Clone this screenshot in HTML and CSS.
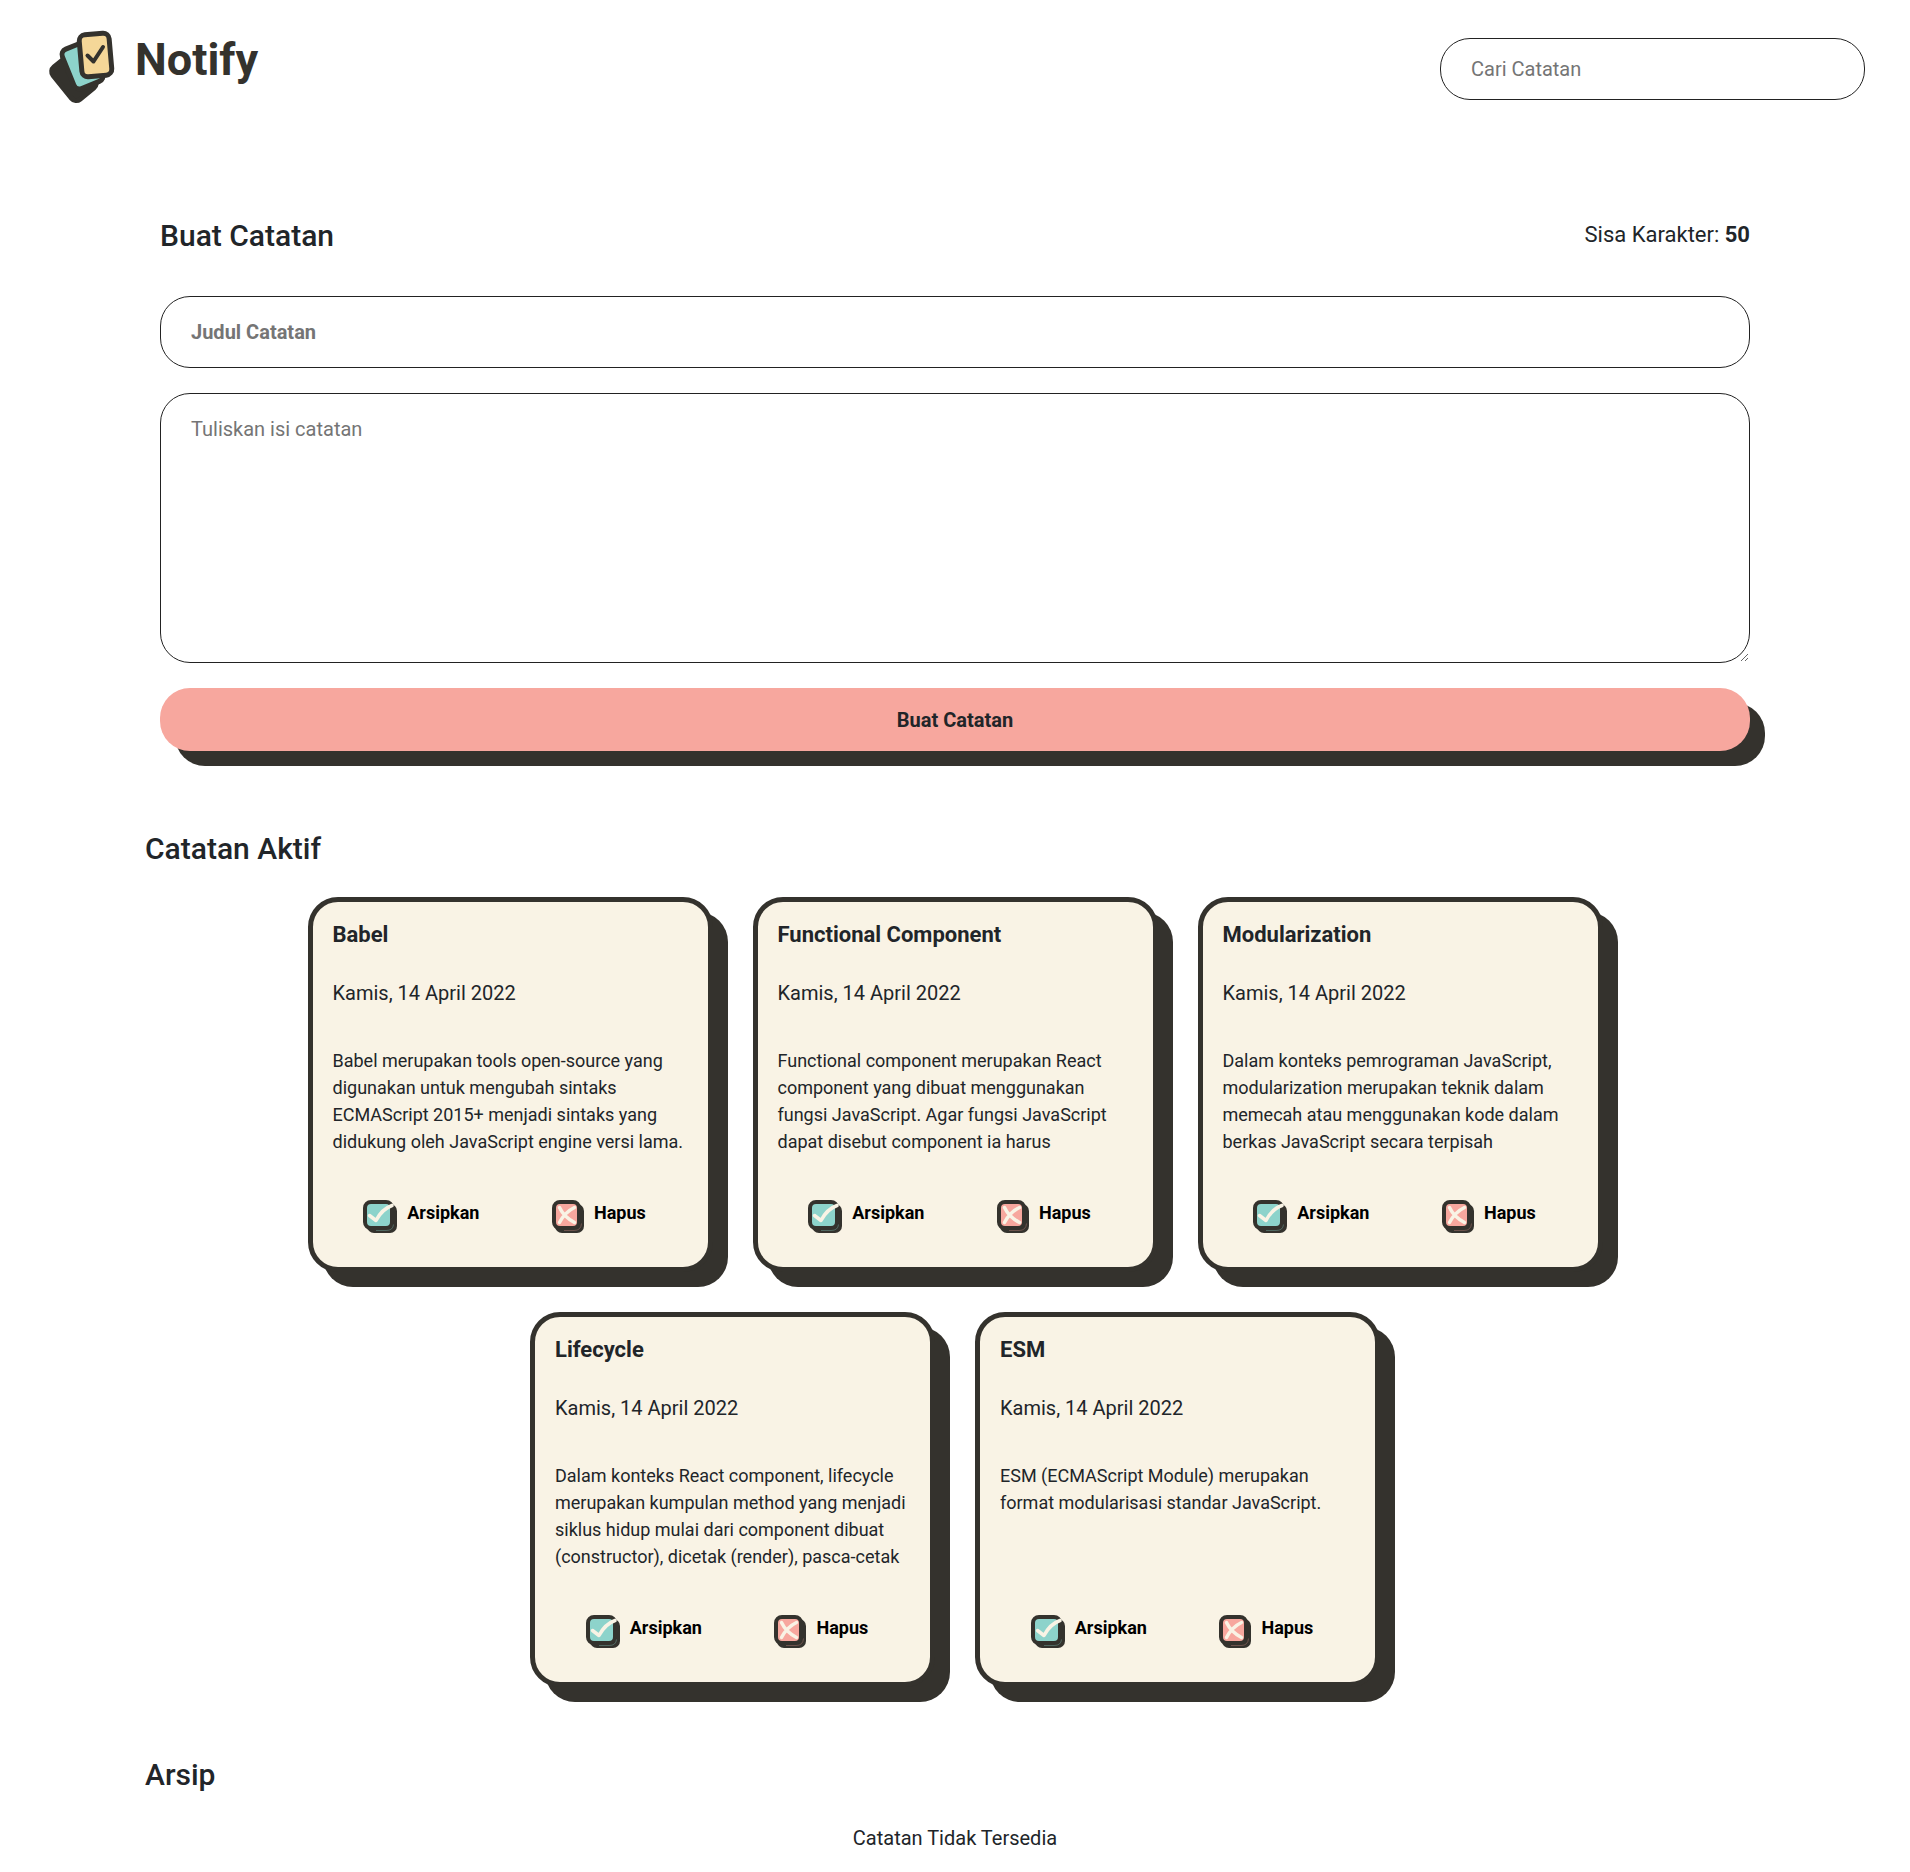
FILE: index.html
```html
<!DOCTYPE html>
<html lang="id">
<head>
<meta charset="utf-8">
<meta name="viewport" content="width=device-width, initial-scale=1">
<title>Notify</title>
<link rel="stylesheet" href="styles.css">
</head>
<body>
<svg class="sprite" aria-hidden="true">
  <symbol id="icon-archive" viewBox="0 0 34 34">
    <rect x="4" y="4" width="30" height="29" rx="7" fill="#34322d"/>
    <rect x="2" y="2" width="27" height="26" rx="6" fill="#8dd3cb" stroke="#34322d" stroke-width="4"/>
    <path d="M13 30.500h10q7 0 7.500-6" fill="none" stroke="#5f7f79" stroke-width=".7"/>
    <path d="M6.500 15.500L13 20.500Q19 9 29 5.500" fill="none" stroke="#f9f3e5" stroke-width="3.500" stroke-linecap="round" stroke-linejoin="round"/>
  </symbol>
  <symbol id="icon-delete" viewBox="0 0 32 34">
    <rect x="3" y="4" width="29" height="29" rx="7" fill="#34322d"/>
    <rect x="2" y="2" width="25" height="26" rx="6" fill="#f7a79e" stroke="#34322d" stroke-width="4"/>
    <path d="M12 30.500h10q7 0 7.500-7" fill="none" stroke="#86625c" stroke-width=".7"/>
    <path d="M7.500 7.500Q12 17 22.500 22.500M22.500 7.500Q13 12 7.500 22.500" fill="none" stroke="#f9f3e5" stroke-width="3.500" stroke-linecap="round"/>
  </symbol>
</svg>

<header class="header">
  <div class="brand">
    <svg class="brand-logo" viewBox="0 0 68 74" aria-hidden="true">
      <g stroke="#34322d" stroke-width="5">
        <rect transform="translate(27 76.500) rotate(-39)" x="2.500" y="-44" width="30" height="41.500" rx="6" fill="#34322d"/>
        <rect transform="translate(29.500 57.500) rotate(-22)" x="-2.500" y="-40" width="31" height="42.500" rx="6" fill="#8dd3cb"/>
        <rect transform="translate(47.500 25) rotate(-5)" x="-15" y="-21" width="30" height="42" rx="6" fill="#f5d798"/>
        <path d="M39.500 25.500L45.500 31.500L55 17" fill="none" stroke-width="4" stroke-linecap="round" stroke-linejoin="round"/>
      </g>
    </svg>
    <h1 class="brand-name">Notify</h1>
  </div>
  <input class="field search" type="search" placeholder="Cari Catatan" aria-label="Cari Catatan">
</header>

<main class="main">
  <form class="note-form">
    <div class="form-head">
      <h2 class="heading">Buat Catatan</h2>
      <p class="counter">Sisa Karakter: <strong>50</strong></p>
    </div>
    <input class="field title-field" type="text" placeholder="Judul Catatan" aria-label="Judul Catatan">
    <textarea class="field body-field" placeholder="Tuliskan isi catatan" aria-label="Tuliskan isi catatan"></textarea>
    <button class="submit" type="submit">Buat Catatan</button>
  </form>

  <section class="section">
    <h2 class="heading">Catatan Aktif</h2>
    <div class="notes">
      <article class="note">
        <h3 class="note-title">Babel</h3>
        <p class="note-date">Kamis, 14 April 2022</p>
        <p class="note-body">Babel merupakan tools open-source yang digunakan untuk mengubah sintaks ECMAScript 2015+ menjadi sintaks yang didukung oleh JavaScript engine versi lama.</p>
        <div class="note-actions">
          <button class="action" type="button"><svg class="action-icon" aria-hidden="true"><use href="#icon-archive"/></svg>Arsipkan</button>
          <button class="action" type="button"><svg class="action-icon action-icon-delete" aria-hidden="true"><use href="#icon-delete"/></svg>Hapus</button>
        </div>
      </article>
      <article class="note">
        <h3 class="note-title">Functional Component</h3>
        <p class="note-date">Kamis, 14 April 2022</p>
        <p class="note-body">Functional component merupakan React component yang dibuat menggunakan fungsi JavaScript. Agar fungsi JavaScript dapat disebut component ia harus</p>
        <div class="note-actions">
          <button class="action" type="button"><svg class="action-icon" aria-hidden="true"><use href="#icon-archive"/></svg>Arsipkan</button>
          <button class="action" type="button"><svg class="action-icon action-icon-delete" aria-hidden="true"><use href="#icon-delete"/></svg>Hapus</button>
        </div>
      </article>
      <article class="note">
        <h3 class="note-title">Modularization</h3>
        <p class="note-date">Kamis, 14 April 2022</p>
        <p class="note-body">Dalam konteks pemrograman JavaScript, modularization merupakan teknik dalam memecah atau menggunakan kode dalam berkas JavaScript secara terpisah</p>
        <div class="note-actions">
          <button class="action" type="button"><svg class="action-icon" aria-hidden="true"><use href="#icon-archive"/></svg>Arsipkan</button>
          <button class="action" type="button"><svg class="action-icon action-icon-delete" aria-hidden="true"><use href="#icon-delete"/></svg>Hapus</button>
        </div>
      </article>
      <article class="note">
        <h3 class="note-title">Lifecycle</h3>
        <p class="note-date">Kamis, 14 April 2022</p>
        <p class="note-body">Dalam konteks React component, lifecycle merupakan kumpulan method yang menjadi siklus hidup mulai dari component dibuat (constructor), dicetak (render), pasca-cetak</p>
        <div class="note-actions">
          <button class="action" type="button"><svg class="action-icon" aria-hidden="true"><use href="#icon-archive"/></svg>Arsipkan</button>
          <button class="action" type="button"><svg class="action-icon action-icon-delete" aria-hidden="true"><use href="#icon-delete"/></svg>Hapus</button>
        </div>
      </article>
      <article class="note">
        <h3 class="note-title">ESM</h3>
        <p class="note-date">Kamis, 14 April 2022</p>
        <p class="note-body">ESM (ECMAScript Module) merupakan format modularisasi standar JavaScript.</p>
        <div class="note-actions">
          <button class="action" type="button"><svg class="action-icon" aria-hidden="true"><use href="#icon-archive"/></svg>Arsipkan</button>
          <button class="action" type="button"><svg class="action-icon action-icon-delete" aria-hidden="true"><use href="#icon-delete"/></svg>Hapus</button>
        </div>
      </article>
    </div>
  </section>

  <section class="section">
    <h2 class="heading">Arsip</h2>
    <p class="empty">Catatan Tidak Tersedia</p>
  </section>
</main>
</body>
</html>
```

FILE: styles.css
```css
:root {
  --dark: #34322d;
  --text: #212529;
  --pink: #f7a79e;
  --cream: #f9f3e5;
}

* {
  box-sizing: border-box;
}

body {
  margin: 0;
  background: #fff;
  color: var(--text);
  font-family: Roboto, "Liberation Sans", sans-serif;
  font-size: 20px;
  line-height: 30px;
}

h1, h2, h3, p {
  margin: 0;
}

.sprite {
  position: absolute;
  width: 0;
  height: 0;
}

/* Header */
.header {
  display: flex;
  justify-content: space-between;
  align-items: flex-start;
  padding: 30px 45px 0 48px;
}

.brand {
  display: flex;
  align-items: flex-start;
  gap: 19px;
}

.brand-logo {
  display: block;
  width: 68px;
  height: 74px;
}

.brand-name {
  color: var(--dark);
  font-size: 45px;
  font-weight: 700;
  line-height: 60px;
}

.field {
  display: block;
  width: 100%;
  margin: 0;
  padding: 20px 30px;
  border: 1px solid #222;
  border-radius: 30px;
  outline: 0;
  background: #fff;
  color: var(--text);
  font: inherit;
}

.field::placeholder {
  color: #757575;
  opacity: 1;
}

.search {
  width: 425px;
  margin-top: 8px;
  padding: 15px 30px;
  appearance: none;
}

/* Form */
.main {
  padding: 114px 145px 19px;
}

.note-form {
  display: flex;
  flex-direction: column;
  gap: 25px;
  padding: 0 15px;
}

.form-head {
  display: flex;
  justify-content: space-between;
  align-items: flex-start;
  padding-bottom: 17px;
}

.heading {
  font-size: 30px;
  font-weight: 500;
  line-height: 36px;
}

.counter {
  font-size: 22px;
  line-height: 33px;
}

.title-field {
  font-weight: 700;
}

.body-field {
  height: 270px;
  resize: both;
}

.submit {
  height: 63px;
  padding: 0 30px;
  border: 0;
  border-radius: 30px;
  background: var(--pink);
  box-shadow: 15px 15px 0 var(--dark);
  color: var(--text);
  font: inherit;
  font-weight: 700;
  cursor: pointer;
}

/* Notes */
.section {
  display: flex;
  flex-direction: column;
  gap: 30px;
  margin-top: 70px;
}

.note-form + .section {
  margin-top: 80px;
}

.notes {
  display: flex;
  flex-wrap: wrap;
  justify-content: center;
  gap: 40px;
}

.note {
  display: flex;
  flex-direction: column;
  width: 405px;
  min-height: 375px;
  padding: 20px 20px 33px;
  border: 5px solid var(--dark);
  border-radius: 30px;
  background: var(--cream);
  box-shadow: 15px 15px 0 var(--dark);
}

.note-title {
  font-size: 22px;
  font-weight: 700;
  line-height: 26px;
}

.note-date {
  margin-top: 30px;
}

.note-body {
  flex: 1;
  margin: 39px 0 45px;
  font-size: 18px;
  line-height: 27px;
}

.note-actions {
  display: flex;
  justify-content: space-around;
}

.action {
  display: flex;
  align-items: flex-start;
  gap: 10px;
  padding: 0 11px 0 0;
  border: 0;
  background: none;
  color: #000;
  font: inherit;
  font-size: 18px;
  font-weight: 700;
  line-height: 25px;
  cursor: pointer;
}

.action-icon {
  width: 34px;
  height: 34px;
}

.action-icon-delete {
  width: 32px;
}

.empty {
  text-align: center;
}
```
